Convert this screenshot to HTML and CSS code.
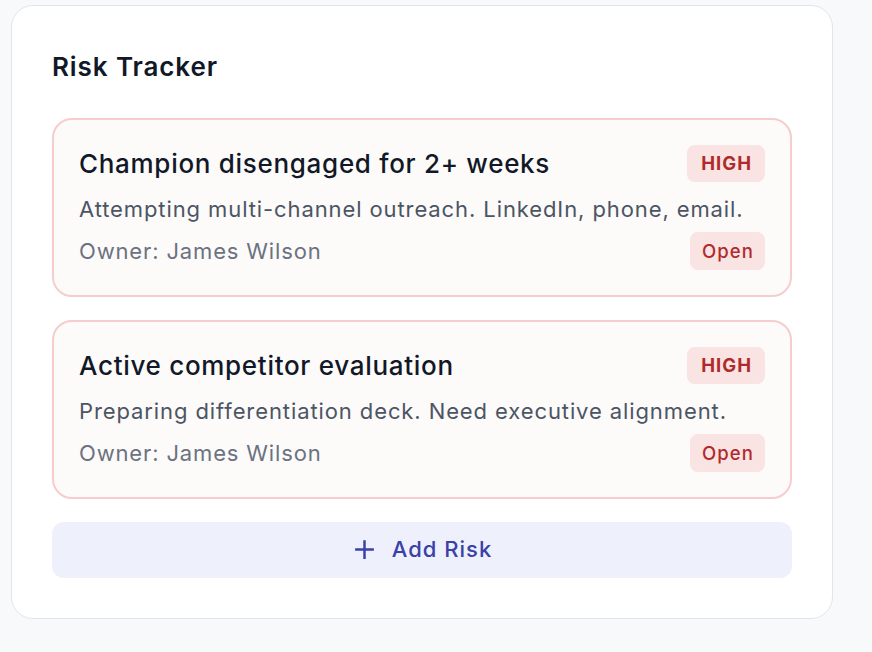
FILE: index.html
```html
<!DOCTYPE html>
<html lang="en">
<head>
<meta charset="utf-8">
<title>Risk Tracker</title>
<link rel="stylesheet" href="styles.css">
</head>
<body>
<div class="page">
  <section class="panel">
    <h2 class="panel-title">Risk Tracker</h2>
    <div class="risk-list">
      <article class="risk">
        <div class="risk-head">
          <h3 class="risk-title">Champion disengaged for 2+ weeks</h3>
          <span class="badge badge-level">HIGH</span>
        </div>
        <p class="risk-desc">Attempting multi-channel outreach. LinkedIn, phone, email.</p>
        <div class="risk-foot">
          <span class="risk-owner">Owner: James Wilson</span>
          <span class="badge badge-status">Open</span>
        </div>
      </article>
      <article class="risk">
        <div class="risk-head">
          <h3 class="risk-title">Active competitor evaluation</h3>
          <span class="badge badge-level">HIGH</span>
        </div>
        <p class="risk-desc">Preparing differentiation deck. Need executive alignment.</p>
        <div class="risk-foot">
          <span class="risk-owner">Owner: James Wilson</span>
          <span class="badge badge-status">Open</span>
        </div>
      </article>
    </div>
    <button class="add-btn" type="button">
      <svg class="add-icon" viewBox="0 0 24 24" width="25" height="25" aria-hidden="true"><path d="M12 3v18M3 12h18" fill="none" stroke="currentColor" stroke-width="2.4" stroke-linecap="butt"/></svg>
      <span>Add Risk</span>
    </button>
  </section>
</div>
</body>
</html>
```

FILE: styles.css
```css
* { box-sizing: border-box; }

html, body {
  margin: 0;
  padding: 0;
  background: #f8f9fb;
  font-family: "Inter", "Noto Sans", sans-serif;
  color: #111827;
}

.page {
  padding: 5px 39px 0 11px;
}

.panel {
  background: #ffffff;
  border: 1.5px solid #e3e5e9;
  border-radius: 22px;
  padding: 43px 40px 40px 40px;
}

.panel-title {
  margin: 0 0 34px 0;
  font-size: 26px;
  line-height: 35px;
  font-weight: 600;
  letter-spacing: 0.9px;
  color: #111827;
}

.risk-list {
  display: flex;
  flex-direction: column;
  gap: 23px;
}

.risk {
  background: #fdfafa;
  border: 2px solid #f5cdcd;
  border-radius: 20px;
  padding: 25px;
}

.risk-head {
  display: flex;
  align-items: center;
  justify-content: space-between;
}

.risk-title {
  margin: 0;
  font-size: 26px;
  line-height: 35px;
  font-weight: 500;
  letter-spacing: 0.7px;
  color: #111827;
}

.risk-desc {
  margin: 12px 0 8px 0;
  font-size: 22px;
  line-height: 30px;
  letter-spacing: 0.9px;
  color: #4b5563;
}

.risk-foot {
  display: flex;
  align-items: center;
  justify-content: space-between;
}

.risk-owner {
  font-size: 22px;
  line-height: 30px;
  letter-spacing: 0.85px;
  color: #6b7280;
}

.badge {
  display: inline-block;
  background: #fae3e3;
  color: #b02a2a;
  border-radius: 8px;
  font-size: 18.5px;
  line-height: 25px;
}

.badge-level {
  padding: 6px 13px 6px 14px;
  font-weight: 700;
  letter-spacing: 1px;
}

.badge-status {
  padding: 6.5px 11px 6.5px 12px;
  font-weight: 500;
  letter-spacing: 1.1px;
}

.add-btn {
  margin-top: 23px;
  width: 100%;
  display: flex;
  align-items: center;
  justify-content: center;
  gap: 15px;
  background: #eef0fc;
  color: #3a41a8;
  border: none;
  border-radius: 12px;
  padding: 15px 15px 16px 15px;
  font-family: inherit;
  font-size: 22px;
  line-height: 25px;
  font-weight: 500;
  letter-spacing: 1px;
  cursor: pointer;
}

.add-icon {
  display: block;
  flex: none;
}
```
